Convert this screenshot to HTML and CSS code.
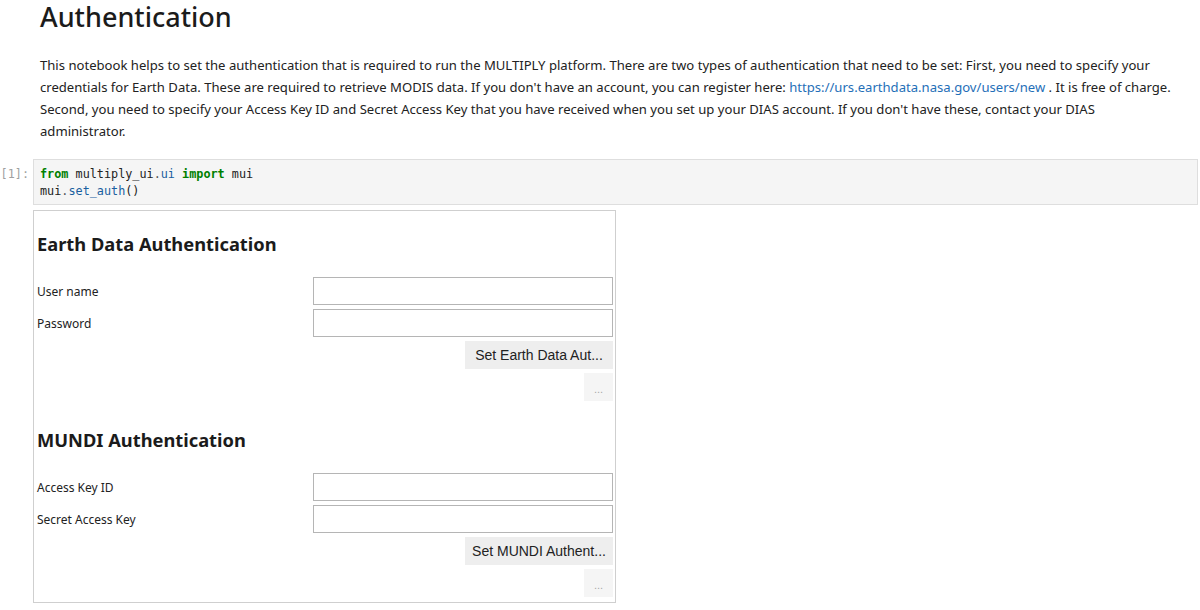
FILE: index.html
```html
<!DOCTYPE html>
<html>
<head>
<meta charset="utf-8">
<link rel="stylesheet" href="styles.css">
</head>
<body>
<div class="notebook">
  <div class="md-cell">
    <h1 class="title">Authentication</h1>
    <p class="intro">This notebook helps to set the authentication that is required to run the MULTIPLY platform. There are two types of authentication that need to be set: First, you need to specify your credentials for Earth Data. These are required to retrieve MODIS data. If you don't have an account, you can register here: <a class="link" href="#">https://urs.earthdata.nasa.gov/users/new</a> . It is free of charge. Second, you need to specify your Access Key ID and Secret Access Key that you have received when you set up your DIAS account. If you don't have these, contact your DIAS administrator.</p>
  </div>
  <div class="code-cell">
    <div class="prompt">[1]:</div>
    <div class="code"><span class="kw">from</span> multiply_ui<span class="op">.</span><span class="attr">ui</span> <span class="kw">import</span> mui
mui<span class="op">.</span><span class="attr">set_auth</span>()</div>
  </div>
  <div class="output">
    <div class="widget">
      <div class="section">
        <h3 class="sec-title">Earth Data Authentication</h3>
        <div class="row"><label class="lbl">User name</label><input class="field" type="text"></div>
        <div class="row"><label class="lbl">Password</label><input class="field" type="password"></div>
        <div class="row end"><button class="btn">Set Earth Data Aut...</button></div>
        <div class="row end"><button class="btn small">...</button></div>
      </div>
      <div class="section second">
        <h3 class="sec-title">MUNDI Authentication</h3>
        <div class="row"><label class="lbl">Access Key ID</label><input class="field" type="text"></div>
        <div class="row"><label class="lbl">Secret Access Key</label><input class="field" type="password"></div>
        <div class="row end"><button class="btn">Set MUNDI Authent...</button></div>
        <div class="row end"><button class="btn small">...</button></div>
      </div>
    </div>
  </div>
</div>
</body>
</html>
```
FILE: styles.css
```css
html, body {
  margin: 0;
  padding: 0;
  background: #ffffff;
}
body {
  font-family: "Noto Sans", "Open Sans", sans-serif;
  color: #1a1a1a;
}
.notebook {
  width: 1200px;
}
.md-cell {
  padding-left: 40px;
  padding-right: 24px;
}
.title {
  margin: 0;
  font-size: 27px;
  font-weight: 500;
  line-height: 34px;
  color: #1b1b1b;
}
.intro {
  margin: 20px 0 0 0;
  font-size: 13.1px;
  line-height: 22px;
  color: #222;
}
.link {
  color: #1f6fb8;
  text-decoration: none;
}
.code-cell {
  display: flex;
  margin-top: 17px;
}
.prompt {
  width: 33px;
  flex: none;
  font-family: "DejaVu Sans Mono", monospace;
  font-size: 11.8px;
  color: #a0a0a0;
  padding: 7px 4px 0 0;
  line-height: 17px;
  box-sizing: border-box;
  text-align: right;
}
.code {
  flex: 1;
  margin-right: 2px;
  background: #f5f5f5;
  border: 1px solid #dedede;
  padding: 6px 6px 4px 6px;
  font-family: "DejaVu Sans Mono", monospace;
  font-size: 11.8px;
  line-height: 17px;
  white-space: pre;
  color: #222;
}
.kw { color: #008000; font-weight: bold; }
.op { color: #555; }
.attr { color: #1a5fa0; }
.output {
  padding-left: 33px;
  margin-top: 5px;
}
.widget {
  width: 583px;
  box-sizing: border-box;
  border: 1px solid #cfcfcf;
  padding: 0 2px 5px 3px;
}
.section {
  display: flex;
  flex-direction: column;
  gap: 4px;
}
.section.second {
  margin-top: 6px;
}
.sec-title {
  margin: 20px 0 16px 0;
  font-size: 18.3px;
  line-height: 26px;
  font-weight: 700;
  color: #1b1b1b;
}
.row {
  display: flex;
  align-items: center;
  height: 28px;
}
.row.end {
  justify-content: flex-end;
}
.lbl {
  flex: 1;
  font-size: 12px;
  color: #222;
}
.field {
  width: 300px;
  height: 28px;
  box-sizing: border-box;
  border: 1px solid #b5b5b5;
  margin: 0;
  padding: 0 6px;
  background: #fff;
}
.btn {
  height: 28px;
  width: 148px;
  border: none;
  margin: 0;
  background: #eeeeee;
  font-family: "Liberation Sans", Arial, sans-serif;
  font-size: 14px;
  color: #222;
  padding: 0;
  white-space: nowrap;
}
.btn.small {
  width: 29px;
  background: #f5f5f5;
  color: #a8a8a8;
  font-size: 11px;
  padding: 4px 0 0 0;
}
```
